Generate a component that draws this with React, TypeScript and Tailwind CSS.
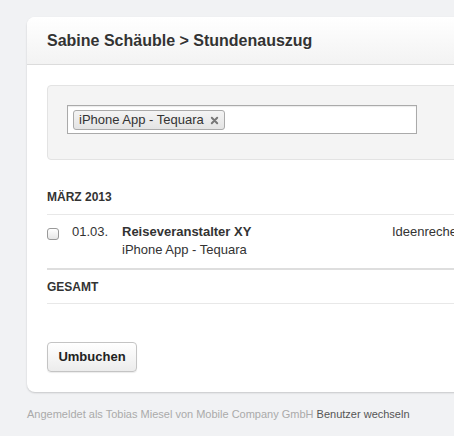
import React from 'react';

const App: React.FC = () => {
  return (
    <div className="min-h-[436px] w-[454px] overflow-hidden bg-[#f1f2f4] pt-[17px] pl-[27px] font-['Liberation_Sans',Arial,sans-serif] text-[#333]">
      <div className="w-[700px] rounded-l-[8px] bg-white shadow-[0_1px_2px_rgba(0,0,0,0.18)]">
        {/* Header */}
        <div className="flex h-[48px] items-center rounded-tl-[8px] border-b border-[#dcdcdc] bg-gradient-to-b from-white to-[#f3f3f3] px-[20px]">
          <h1 className="text-[16px] font-bold text-[#333] [text-shadow:0_1px_0_#fff]">
            Sabine Schäuble &gt; Stundenauszug
          </h1>
        </div>

        <div className="px-[20px] pt-[20px] pb-[20px]">
          {/* Filter */}
          <div className="h-[75px] rounded-[4px] border border-[#e3e3e3] bg-[#f4f4f4] pt-[19px] pl-[19px]">
            <div className="flex h-[29px] w-[350px] items-center border border-[#aaa] bg-white px-[5px] shadow-[inset_0_1px_1px_rgba(0,0,0,0.08)]">
              <span className="flex h-[20px] items-center gap-[6px] rounded-[3px] border border-[#aaa] bg-gradient-to-b from-[#f4f4f4] to-[#e4e4e4] px-[5px] text-[13px] text-[#333]">
                iPhone App - Tequara
                <svg width="9" height="9" viewBox="0 0 10 10" className="mt-[1px]">
                  <path d="M2 2 L8 8 M8 2 L2 8" stroke="#777" strokeWidth="2.2" strokeLinecap="round" />
                </svg>
              </span>
            </div>
          </div>

          {/* Month */}
          <div className="mt-[29px] border-b border-[#e8e8e8] pb-[9px] text-[12px] leading-[16px] font-bold text-[#333]">
            MÄRZ 2013
          </div>

          <div className="flex border-b-2 border-[#dedede] pt-[8px] pb-[9px] text-[13px] leading-[18px]">
            <div className="w-[25px] pt-[5px]">
              <span className="block h-[12px] w-[12px] rounded-[3px] border border-[#999] bg-gradient-to-b from-white to-[#e6e6e6]" />
            </div>
            <div className="w-[50px] text-[#333]">01.03.</div>
            <div className="w-[270px]">
              <div className="font-bold text-[#333]">Reiseveranstalter XY</div>
              <div className="text-[#333]">iPhone App - Tequara</div>
            </div>
            <div className="text-[#333]">Ideenrecherche</div>
          </div>

          <div className="border-b border-[#e8e8e8] pt-[9px] pb-[8px] text-[12px] leading-[16px] font-bold text-[#333]">GESAMT</div>

          <button className="mt-[38px] h-[30px] w-[90px] rounded-[4px] border border-[#c4c4c4] bg-gradient-to-b from-white to-[#ececec] text-[13px] font-bold text-[#222] shadow-[0_1px_1px_rgba(0,0,0,0.08)]">
            Umbuchen
          </button>
        </div>
      </div>

      <div className="mt-[14px] text-[11px] text-[#aaa]">
        Angemeldet als Tobias Miesel von Mobile Company GmbH <span className="text-[#555]">Benutzer wechseln</span>
      </div>
    </div>
  );
};

export default App;
